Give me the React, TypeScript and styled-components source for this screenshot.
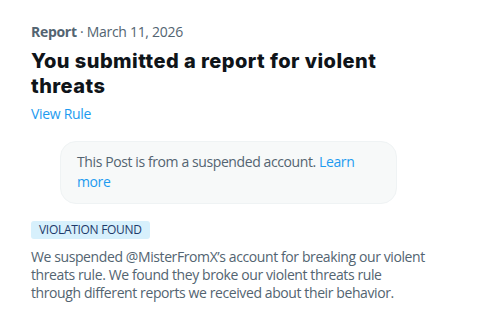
import React from "react";
import styled, { createGlobalStyle } from "styled-components";

const Global = createGlobalStyle`
  html, body { margin: 0; padding: 0; background: #ffffff; }
  body { font-family: "Open Sans", "Noto Sans", sans-serif; color: #0f1419; }
`;

const Page = styled.main`
  padding: 23px 32px 0 31px;
  display: flex;
  flex-direction: column;
`;

const Meta = styled.div`
  font-size: 14px;
  line-height: 18px;
  letter-spacing: -0.3px;
  color: #536471;
`;

const MetaStrong = styled.span`
  font-weight: 700;
`;

const Title = styled.h1`
  margin: 8px 0 0;
  max-width: 390px;
  font-family: Inter, sans-serif;
  font-size: 20px;
  font-weight: 800;
  line-height: 25px;
  letter-spacing: 0.45px;
  color: #0f1419;
`;

const Link = styled.a`
  color: #1d9bf0;
  text-decoration: none;
  cursor: pointer;
`;

const RuleLink = styled(Link)`
  margin-top: 6px;
  font-size: 14px;
  line-height: 18px;
  letter-spacing: -0.3px;
`;

const Notice = styled.div`
  margin: 18px 52px 0 29px;
  padding: 10px 16px 11px;
  background: #f7f9f9;
  border: 1px solid #eff3f4;
  border-radius: 16px;
  font-size: 14px;
  line-height: 20px;
  letter-spacing: -0.4px;
  color: #536471;
`;

const Badge = styled.span`
  align-self: flex-start;
  margin-top: 17px;
  padding: 0 8px;
  height: 18px;
  line-height: 18px;
  border-radius: 3px;
  background: #d7f0fc;
  color: #1e3a6a;
  font-size: 12px;
  letter-spacing: -0.3px;
`;

const Body = styled.p`
  margin: 9px 0 0;
  max-width: 400px;
  font-size: 14px;
  line-height: 18px;
  letter-spacing: -0.4px;
  color: #536471;
`;

export default function App() {
  return (
    <>
      <Global />
      <Page>
        <Meta>
          <MetaStrong>Report</MetaStrong> · March 11, 2026
        </Meta>
        <Title>You submitted a report for violent threats</Title>
        <RuleLink>View Rule</RuleLink>
        <Notice>
          This Post is from a suspended account. <Link>Learn more</Link>
        </Notice>
        <Badge>VIOLATION FOUND</Badge>
        <Body>
          We suspended @MisterFromX’s account for breaking our violent threats rule. We found they
          broke our violent threats rule through different reports we received about their
          behavior.
        </Body>
      </Page>
    </>
  );
}
